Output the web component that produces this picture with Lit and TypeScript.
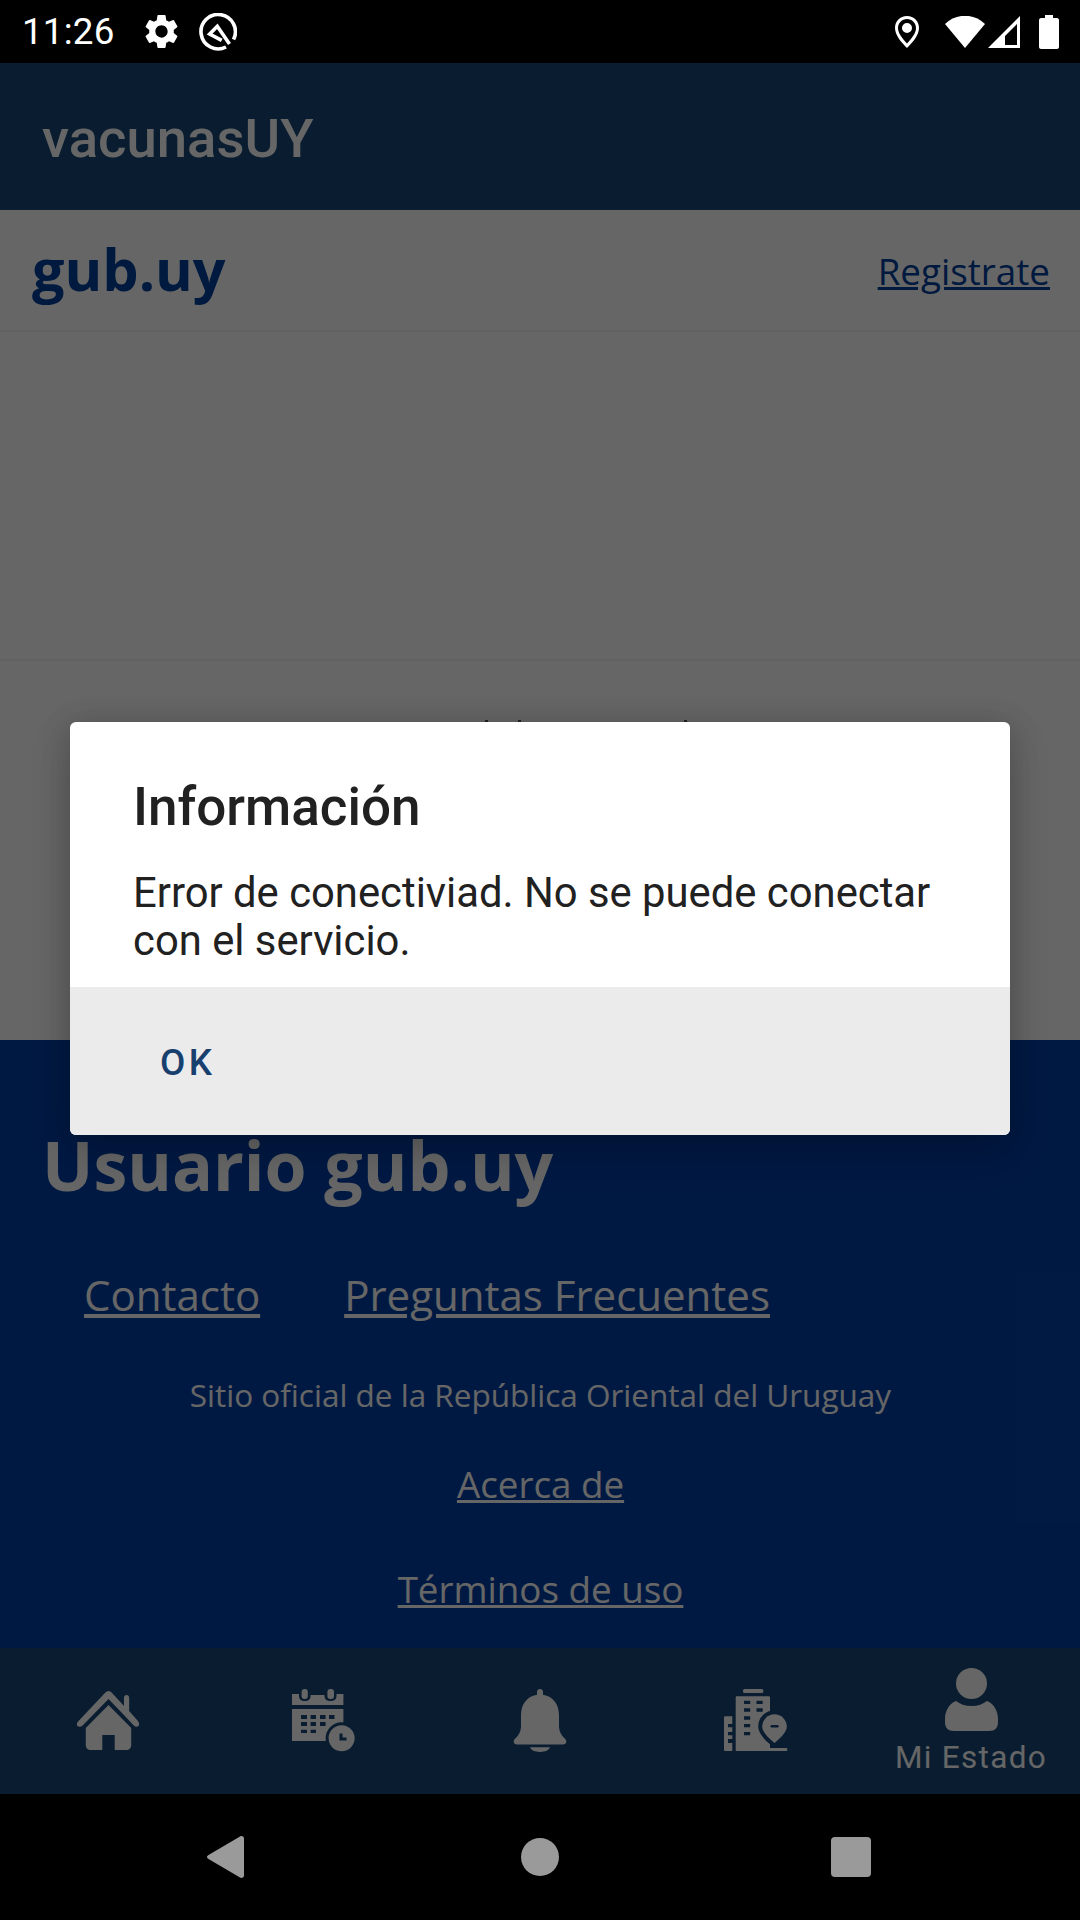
import { LitElement, html, css, svg } from "lit";
import { customElement } from "lit/decorators.js";

// tab bar colour before the scrim, used to cut shapes out of the tab icons
const BAR = "#174879";

const ICON_HOME = svg`
  <path d="M31 0c-1 0-2 .5-3 1.500L2 30c-2 2-2 4-1 5s3 1 4.500 0L31 8l14.500 15.500 10 11c1.500 1.500 3.500 1.500 4.500.5s1-3-.5-5L51 20V7c0-2-1-3-2.500-3S46 5 46 7v8L34 1.500C33 .5 32 0 31 0z"/>
  <path d="M31 14 9 37v17c0 3 2 5 5 5h11V44h12v15h11c3 0 5-2 5-5V37L31 14z"/>`;

const ICON_CALENDAR = svg`
  <rect x="9.600" y="0" width="6.200" height="10" rx="3"/>
  <rect x="35.400" y="0" width="6.600" height="10" rx="3"/>
  <path d="M0 5h7v2c0 3 2 5 5.800 5s5.800-2 5.800-5V6H20l11 0h1.500v1c0 3 2 5 6 5s6-2 6-5V5h6.900v11H0z"/>
  <path fill-rule="evenodd" d="M0 20h51.400v32H0zM9 26v4h6v-4zM18.600 26v4H24v-4zM28 26v4h5.600v-4zM37 26v4h5.500v-4zM9 33v4h6v-4zM18.600 33v4H24v-4zM28 33v4h5.600v-4zM9 40.700V44h6v-3.300zM18.600 40.700V44H24v-3.300z"/>
  <circle cx="49.600" cy="49.300" r="13" stroke=${BAR} stroke-width="6" paint-order="stroke"/>
  <path fill=${BAR} d="M47.500 44.500h3v4h4v3h-7z"/>`;

const ICON_BELL = svg`
  <path d="M27 0c-2 0-3 1.500-3 3v3C13 8 8 17 8 28v12c0 5-2 9-6 13-2 2-2 6 2 6h46c4 0 4-4 2-6-4-4-6-8-6-13V28c0-11-5-20-16-22V3c0-1.500-1-3-3-3z"/>
  <path d="M17 62c1 3 5 5 10 5s9-2 10-5z"/>`;

const ICON_BUILDING = svg`
  <rect x="19" y="0" width="20.300" height="4" rx="1.500"/>
  <path fill-rule="evenodd" d="M13 7.300h31.500c1 0 1.500.5 1.500 1.500V62H11.700V8.800c0-1 .3-1.500 1.300-1.500zM20 11.700V15h6.200v-3.300zM32.500 11.700V15h6.200v-3.300zM20 19.300v3.400h6.200v-3.400zM32.500 19.300v3.400h6.200v-3.400zM20 27.300v3.400h6.200v-3.400zM20 35v3.300h6.200V35zM20 43v3.300h6.200V43z"/>
  <path fill-rule="evenodd" d="M1.500 27.300h6.800V35H4v3.300h4.300V43H4v3.300h4.300V50H4v4h4.300v8H1.500C.5 62 0 61.500 0 60.500V28.800c0-1 .5-1.500 1.500-1.500z"/>
  <path d="M46 59h16c1 0 1.400.7 1.400 1.500S63 62 62 62H46z"/>
  <path stroke=${BAR} stroke-width="8" paint-order="stroke" d="M50.500 25.300a12.300 12.300 0 0 1 12.300 12.300c0 5-5 10.500-12.300 16.400-7.300-5.900-12.300-11.400-12.300-16.400a12.300 12.300 0 0 1 12.300-12.300z"/>
  <rect x="46.500" y="36" width="8.200" height="2.400" rx="1.200" fill=${BAR}/>`;

const ICON_PERSON = svg`
  <circle cx="26.500" cy="15.500" r="15.500"/>
  <path d="M11 33c-6 2-11 9-11 18v3c0 6 3 9 9 9h35c6 0 9-3 9-9v-3c0-9-5-16-11-18-4 3-9 5-15.500 5S15 36 11 33z"/>`;

@customElement("app-root")
export class AppRoot extends LitElement {
  static override styles = css`
    :host {
      display: block;
      width: 1080px;
      height: 1920px;
      overflow: hidden;
      position: relative;
      background: #000;
      font-family: Roboto, "Noto Sans", sans-serif;
    }

    .page {
      height: 1920px;
      display: flex;
      flex-direction: column;
    }

    /* status bar */
    .status {
      height: 63px;
      flex: none;
      background: #000;
      color: #fff;
      display: flex;
      align-items: center;
      box-sizing: border-box;
      padding: 0 21px 0 22px;
      position: relative;
      z-index: 3;
    }
    .time {
      font-size: 36.750px;
      width: 119px;
      letter-spacing: 0.2px;
    }
    .status svg {
      display: block;
      fill: #fff;
      flex: none;
    }
    .status .spacer {
      flex: 1;
    }

    /* dimmed page */
    .appbar {
      height: 147px;
      flex: none;
      background: #174879;
      color: #fff;
      display: flex;
      align-items: center;
      box-sizing: border-box;
      padding: 2px 0 0 42px;
      font-size: 54.500px;
      font-weight: 500;
    }
    .web {
      flex: 1;
      background: #fff;
      display: flex;
      flex-direction: column;
      font-family: "Open Sans", "Noto Sans", sans-serif;
    }
    .gub-bar {
      height: 122px;
      flex: none;
      box-sizing: border-box;
      border-bottom: 2px solid #f2f2f2;
      display: flex;
      align-items: center;
      justify-content: space-between;
      padding: 0 30px 2px 32px;
    }
    .brand {
      font-size: 57.500px;
      font-weight: 700;
      color: #00409e;
    }
    .register {
      font-size: 36.750px;
      color: #00409e;
      text-decoration: underline;
      margin-top: 4px;
    }
    .blank {
      height: 329px;
      flex: none;
      border-bottom: 2px solid #f2f2f2;
      box-sizing: border-box;
    }
    /* only the tips of a line hidden behind the dialog show above it */
    .login {
      height: 379px;
      flex: none;
      box-sizing: border-box;
      padding: 59px 0 0 485px;
      display: flex;
      align-items: flex-start;
    }
    .login i {
      display: block;
      width: 3px;
      height: 3px;
      background: #555;
    }
    .login i + i {
      margin-left: 30px;
    }
    .login i + i + i {
      margin-left: 163px;
    }
    .footer {
      height: 608px;
      flex: none;
      background: #0040a8;
      color: #fff;
      box-sizing: border-box;
      padding: 79px 0 0 42px;
      display: flex;
      flex-direction: column;
    }
    .footer h2 {
      margin: 0;
      font-size: 68px;
      line-height: 92px;
      font-weight: 700;
    }
    .links {
      display: flex;
      gap: 84px;
      margin: 55px 0 0 42px;
      font-size: 42px;
      line-height: 57px;
    }
    .footer a {
      color: #fff;
      text-decoration: underline;
    }
    .centered {
      margin-left: -41px;
      text-align: center;
    }
    .official {
      margin-top: 51px;
      font-size: 31.500px;
      line-height: 42px;
    }
    .about {
      margin-top: 43px;
      font-size: 36.750px;
      line-height: 50px;
    }
    .terms {
      margin-top: 55px;
      font-size: 36.750px;
      line-height: 50px;
    }

    /* tab bar */
    .tabs {
      height: 146px;
      flex: none;
      background: #174879;
      display: grid;
      grid-template-columns: repeat(5, 216px);
    }
    .tab {
      display: flex;
      flex-direction: column;
      align-items: center;
      color: #fff;
      font-size: 31.500px;
      letter-spacing: 1.300px;
      line-height: 37px;
    }
    .tab svg {
      display: block;
      fill: #fff;
    }
    .tab.home {
      padding-top: 43px;
    }
    .tab.cal,
    .tab.bell,
    .tab.build {
      padding-top: 41px;
    }
    .tab.cal {
      padding-right: 2px;
    }
    .tab.me {
      padding: 20px 2px 0 0;
      gap: 8px;
    }

    /* system navigation */
    .nav {
      height: 126px;
      flex: none;
      background: #000;
      position: relative;
      z-index: 3;
      box-sizing: border-box;
      padding-left: 68px;
      display: grid;
      grid-template-columns: repeat(3, 315px);
      align-items: center;
      justify-items: center;
    }
    .nav svg {
      display: block;
      fill: #9a9a9a;
    }
    .nav .circle {
      margin-right: 2px;
    }
    .nav .square {
      margin-right: 10px;
    }

    /* dialog layer */
    .scrim {
      position: absolute;
      inset: 0;
      background: rgba(0, 0, 0, 0.6);
      z-index: 2;
    }
    .dialog {
      position: absolute;
      z-index: 2;
      left: 70px;
      top: 722px;
      width: 940px;
      height: 413px;
      background: #fff;
      border-radius: 6px;
      overflow: hidden;
      box-shadow: 0 16px 40px rgba(0, 0, 0, 0.18), 0 0 30px rgba(0, 0, 0, 0.14);
      display: flex;
      flex-direction: column;
    }
    .dialog-body {
      height: 265px;
      flex: none;
      box-sizing: border-box;
      padding: 54px 60px 0 63px;
      color: #212121;
    }
    .dialog-title {
      font-size: 53px;
      font-weight: 500;
      line-height: 62px;
      margin: 0 0 31px;
    }
    .dialog-text {
      font-size: 41.800px;
      line-height: 48px;
      margin: 0;
    }
    .dialog-actions {
      flex: 1;
      background: #ebebeb;
      display: flex;
      align-items: center;
      padding: 2px 0 0 90px;
      font-size: 36.750px;
      font-weight: 500;
      letter-spacing: 3.500px;
      color: #17406f;
    }
  `;

  override render() {
    return html`
      <div class="page">
        <div class="status">
          <span class="time">11:26</span>
          <svg width="41" height="41" viewBox="0 0 24 24">
            <path d="M19.140 12.940c.04-.3.060-.61.060-.94 0-.32-.020-.64-.070-.94l2.030-1.580a.49.49 0 0 0 .12-.61l-1.920-3.320a.49.49 0 0 0-.59-.22l-2.390.96c-.5-.38-1.030-.7-1.620-.94l-.36-2.540a.48.48 0 0 0-.48-.41h-3.840a.47.47 0 0 0-.47.41l-.36 2.540c-.59.240-1.130.570-1.620.94l-2.390-.96a.48.48 0 0 0-.59.220L2.740 8.870c-.12.210-.08.470.12.610l2.030 1.580c-.05.300-.09.630-.09.940s.020.640.070.940l-2.030 1.580a.49.49 0 0 0-.12.610l1.920 3.320c.12.220.37.290.59.220l2.390-.96c.5.380 1.030.7 1.620.94l.36 2.540c.05.240.24.410.48.410h3.840c.24 0 .44-.17.470-.41l.36-2.540c.59-.24 1.130-.56 1.620-.94l2.390.96c.22.080.47 0 .59-.22l1.920-3.320c.12-.22.070-.47-.12-.61l-2.010-1.580zM12 15.600A3.610 3.610 0 0 1 8.400 12c0-1.980 1.620-3.600 3.600-3.600s3.600 1.620 3.600 3.600-1.620 3.600-3.600 3.600z"/>
          </svg>
          <svg style="margin-left:17px" width="38" height="38" viewBox="0 0 38 38">
            <g fill="none" stroke="#fff" stroke-width="3.600">
              <path d="M27 34a17.200 17.200 0 1 1 7.500-7.500"/>
              <path d="M30.500 31 18.300 13.300 10.700 21l12 6.300"/>
            </g>
          </svg>
          <span class="spacer"></span>
          <svg width="24" height="32" viewBox="0 0 24 32">
            <path fill-rule="evenodd" d="M12 0C5 0 0 5 0 12c0 7 6 14 12 20 6-6 12-13 12-20C24 5 19 0 12 0zm0 3c5 0 9 4 9 9 0 5-4 10-9 15.500C7 22 3 17 3 12c0-5 4-9 9-9zm0 4a5 5 0 1 0 0 10 5 5 0 0 0 0-10z"/>
          </svg>
          <svg style="margin-left:26px" width="40" height="32" viewBox="0 0 40 32">
            <path d="M20 32 0 8c11-11 29-11 40 0z"/>
          </svg>
          <svg style="margin-left:3px" width="32" height="32" viewBox="0 0 32 32">
            <path fill-rule="evenodd" d="M32 0v32H0zm-3 8L17 20v9h12z"/>
          </svg>
          <svg style="margin-left:19px" width="20" height="34" viewBox="0 0 20 34">
            <path d="M6 0h8v3h4c1 0 2 1 2 2v27c0 1-1 2-2 2H2c-1 0-2-1-2-2V5c0-1 1-2 2-2h4z"/>
          </svg>
        </div>

        <div class="appbar">vacunasUY</div>

        <div class="web">
          <div class="gub-bar">
            <span class="brand">gub.uy</span>
            <a class="register">Registrate</a>
          </div>
          <div class="blank"></div>
          <div class="login"><i></i><i></i><i></i></div>
          <div class="footer">
            <h2>Usuario gub.uy</h2>
            <div class="links"><a>Contacto</a><a>Preguntas Frecuentes</a></div>
            <div class="centered official">Sitio oficial de la República Oriental del Uruguay</div>
            <div class="centered about"><a>Acerca de</a></div>
            <div class="centered terms"><a>Términos de uso</a></div>
          </div>
        </div>

        <div class="tabs">
          <div class="tab home"><svg width="63" height="59" viewBox="0.5 0 61 59" preserveAspectRatio="none">${ICON_HOME}</svg></div>
          <div class="tab cal"><svg width="63" height="63" viewBox="0 0 63 63">${ICON_CALENDAR}</svg></div>
          <div class="tab bell"><svg width="54" height="63" viewBox="0 0 54 67" preserveAspectRatio="none">${ICON_BELL}</svg></div>
          <div class="tab build"><svg width="64" height="63" viewBox="0 0 64 63">${ICON_BUILDING}</svg></div>
          <div class="tab me">
            <svg width="53" height="63" viewBox="0 0 53 63">${ICON_PERSON}</svg>
            <span>Mi Estado</span>
          </div>
        </div>

        <div class="nav">
          <svg width="37" height="42" viewBox="0 0 37 42"><path d="M33 .5 1.500 19c-2 1-2 3 0 4L33 41.500c2 1 4 0 4-2v-37c0-2-2-3-4-2z"/></svg>
          <svg class="circle" width="38" height="38" viewBox="0 0 38 38"><circle cx="19" cy="19" r="19"/></svg>
          <svg class="square" width="40" height="40" viewBox="0 0 40 40"><rect width="40" height="40" rx="4"/></svg>
        </div>
      </div>

      <div class="scrim"></div>
      <div class="dialog">
        <div class="dialog-body">
          <p class="dialog-title">Información</p>
          <p class="dialog-text">Error de conectiviad. No se puede conectar con el servicio.</p>
        </div>
        <div class="dialog-actions">OK</div>
      </div>
    `;
  }
}

declare global {
  interface HTMLElementTagNameMap {
    "app-root": AppRoot;
  }
}
